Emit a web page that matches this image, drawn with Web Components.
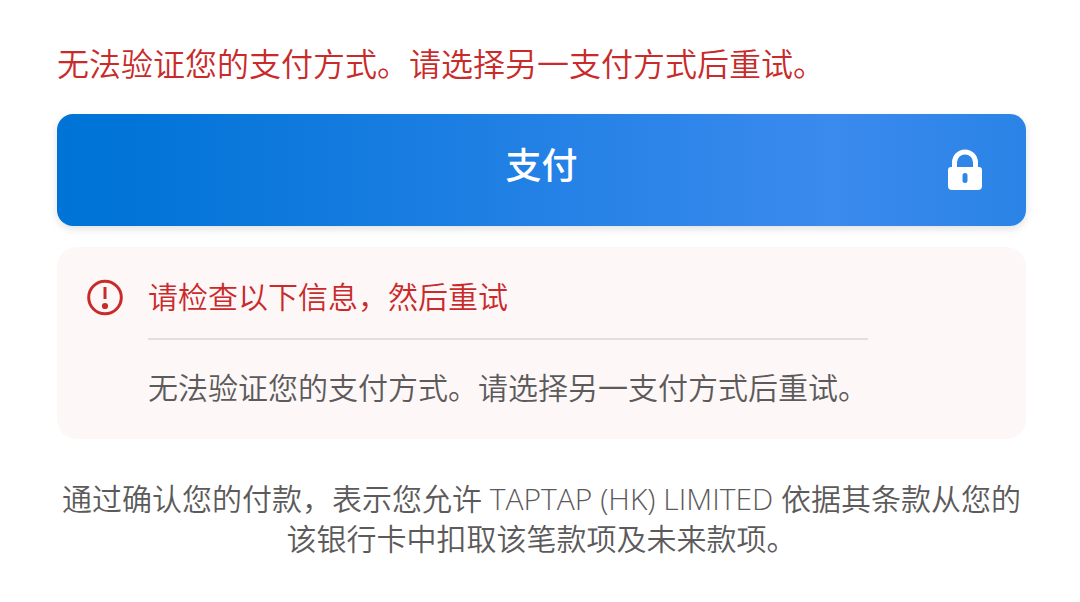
<!DOCTYPE html>
<html lang="zh-CN">
<head>
<meta charset="utf-8">
<meta name="viewport" content="width=device-width, initial-scale=1">
<title>支付</title>
<style>
  body {
    margin: 0;
    background: #fff;
    color: #5c5a5a;
    font-family: "Open Sans", "Noto Sans CJK SC", sans-serif;
    font-size: 30px;
    font-weight: 350;
    line-height: 40px;
  }
</style>
</head>
<body>
<payment-panel>
  <payment-error slot="error">无法验证您的支付方式。请选择另一支付方式后重试。</payment-error>
  <pay-button>支付</pay-button>
  <error-notice>
    <span slot="title">请检查以下信息，然后重试</span>
    无法验证您的支付方式。请选择另一支付方式后重试。
  </error-notice>
  <payment-terms>通过确认您的付款，表示您允许 TAPTAP (HK) LIMITED 依据其条款从您的该银行卡中扣取该笔款项及未来款项。</payment-terms>
</payment-panel>

<template id="payment-panel">
  <style>
    :host { display: block; padding: 44px 54px 42px 57px; }
    main { display: flex; flex-direction: column; }
  </style>
  <main><slot name="error"></slot><slot></slot></main>
</template>

<template id="payment-error">
  <style>
    :host { display: block; margin-bottom: 30px; }
    p { margin: 0; color: #c92a2a; font-size: 32px; line-height: 40px; }
  </style>
  <p role="alert"><slot></slot></p>
</template>

<template id="pay-button">
  <style>
    :host { display: block; margin-bottom: 21px; }
    button {
      display: grid;
      grid-template-columns: 1fr auto 1fr;
      align-items: center;
      width: 100%;
      height: 112px;
      padding: 0 44px;
      border: 0;
      border-radius: 16px;
      background: linear-gradient(90deg, #0074d6 0%, #0274d8 8%, #3b8aee 80%, #2a83e6 100%);
      box-shadow: 0 3px 8px rgba(0, 0, 0, .12);
      color: #fff;
      font: inherit;
      font-size: 36px;
      font-weight: 500;
      line-height: 40px;
      cursor: pointer;
    }
    span { grid-column: 2; padding-bottom: 8px; }
    svg { justify-self: end; width: 34px; height: 42px; }
  </style>
  <button type="button">
    <span><slot></slot></span>
    <svg viewBox="0 0 34 42" aria-hidden="true">
      <path d="M6.500 20V13.500a10.500 10.500 0 0 1 21 0V20" fill="none" stroke="#fff" stroke-width="5"/>
      <path fill="#fff" fill-rule="evenodd" d="M3 18h28a3 3 0 0 1 3 3v16a4 4 0 0 1-4 4H4a4 4 0 0 1-4-4V21a3 3 0 0 1 3-3zm14 6a2.500 2.500 0 0 0-2.500 2.500v5a2.500 2.500 0 0 0 5 0v-5A2.500 2.500 0 0 0 17 24z"/>
    </svg>
  </button>
</template>

<template id="error-notice">
  <style>
    :host { display: block; margin-bottom: 40px; }
    section {
      display: flex;
      align-items: flex-start;
      gap: 24px;
      padding: 30px;
      border-radius: 20px;
      background: #fdf7f7;
    }
    svg { flex: none; width: 37px; height: 40px; }
    h2 {
      margin: 0;
      padding-bottom: 21px;
      border-bottom: 2px solid #e4dfdf;
      color: #c92a2a;
      font-size: 30px;
      font-weight: 350;
      line-height: 40px;
    }
    p { margin: 28px 0 0; }
    div { padding-bottom: 1px; }
  </style>
  <section role="alert">
    <svg viewBox="0 0 37 40" aria-hidden="true">
      <circle cx="18" cy="20.500" r="16.300" fill="none" stroke="#c92a2a" stroke-width="3"/>
      <path d="M18 10V22" stroke="#c92a2a" stroke-width="3"/>
      <circle cx="18" cy="29" r="3.100" fill="#c92a2a"/>
    </svg>
    <div>
      <h2><slot name="title"></slot></h2>
      <p><slot></slot></p>
    </div>
  </section>
</template>

<template id="payment-terms">
  <style>
    :host { display: block; }
    p { margin: 0; text-align: center; }
  </style>
  <p><slot></slot></p>
</template>

<script>
  class TemplateElement extends HTMLElement {
    constructor() {
      super();
      const template = document.getElementById(this.localName);
      this.attachShadow({ mode: "open" }).append(template.content.cloneNode(true));
    }
  }
  for (const name of ["payment-panel", "payment-error", "pay-button", "error-notice", "payment-terms"]) {
    customElements.define(name, class extends TemplateElement {});
  }
</script>
</body>
</html>
